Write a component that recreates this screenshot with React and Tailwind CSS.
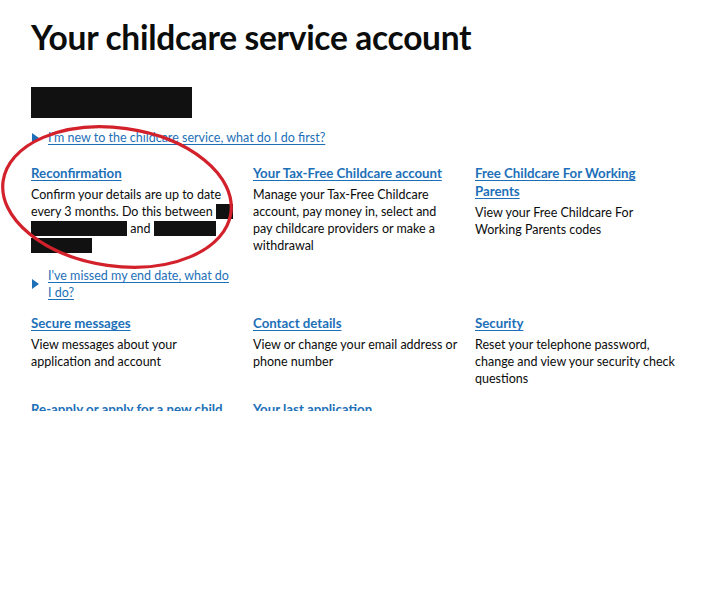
import React from 'react';

const font = "font-['Lato','Liberation_Sans',sans-serif]";

function Marker() {
  return (
    <svg width="7" height="10" viewBox="0 0 7 10" className="shrink-0">
      <path d="M0 0 L7 5 L0 10 Z" fill="#1d70b8" />
    </svg>
  );
}

function Details({ children }) {
  return (
    <div className="flex items-center gap-[9px] pl-[1px]">
      <Marker />
      <a href="#" className="text-[#1d70b8] underline underline-offset-2 leading-[17px]">
        {children}
      </a>
    </div>
  );
}

function Card({ title, children, extra }) {
  return (
    <div className="mb-[13px] pr-[17px]">
      <a
        href="#"
        className="block text-[13.25px] font-bold text-[#1d70b8] underline underline-offset-2 leading-[18px]"
      >
        {title}
      </a>
      <p className="mt-1 leading-[17px] text-[#0b0c0c]">{children}</p>
      {extra}
    </div>
  );
}

function Redacted({ w }) {
  return <span className="inline-block h-[15px] align-[-3px] bg-[#111]" style={{ width: w }} />;
}

export default function App() {
  const cards = [
    {
      title: 'Your Tax-Free Childcare account',
      body: 'Manage your Tax-Free Childcare account, pay money in, select and pay childcare providers or make a withdrawal',
    },
    {
      title: 'Free Childcare For Working Parents',
      body: 'View your Free Childcare For Working Parents codes',
    },
    { title: 'Secure messages', body: 'View messages about your application and account' },
    { title: 'Contact details', body: 'View or change your email address or phone number' },
    {
      title: 'Security',
      body: 'Reset your telephone password, change and view your security check questions',
    },
    { title: 'Re-apply or apply for a new child', body: '' },
    { title: 'Your last application', body: '' },
  ];

  return (
    <div className={`w-[716px] h-[600px] bg-white ${font}`}>
      <div className="relative h-[411px] overflow-hidden px-[31px] pt-[19px] text-[12.5px] text-[#0b0c0c]">
        <h1 className="text-[33.5px] font-bold leading-[36px] tracking-[-0.3px]">Your childcare service account</h1>

        <div className="mt-[32px] w-[161px] h-[31px] bg-[#111]" />

        <div className="mt-[11px]">
          <Details>I'm new to the childcare service, what do I do first?</Details>
        </div>

        <div className="mt-[18px] grid grid-cols-[222px_222px_222px]">
          <Card
            title="Reconfirmation"
            extra={
              <div className="mt-[13px] pr-[4px]">
                <Details>I've missed my end date, what do I do?</Details>
              </div>
            }
          >
            Confirm your details are up to date
            <br />
            every 3 months. Do this between <Redacted w={17} />
            <br />
            <Redacted w={96} /> and <Redacted w={62} />
            <br />
            <Redacted w={61} />
          </Card>
          {cards.map((c) => (
            <Card key={c.title} title={c.title}>
              {c.body}
            </Card>
          ))}
        </div>

        {/* marker drawn around the reconfirmation box */}
        <svg className="absolute left-0 top-0 pointer-events-none" width="260" height="290">
          <ellipse
            cx="117"
            cy="197"
            rx="115"
            ry="69"
            transform="rotate(8 117 197)"
            fill="none"
            stroke="#d3212b"
            strokeWidth="3.2"
          />
        </svg>
      </div>
    </div>
  );
}
